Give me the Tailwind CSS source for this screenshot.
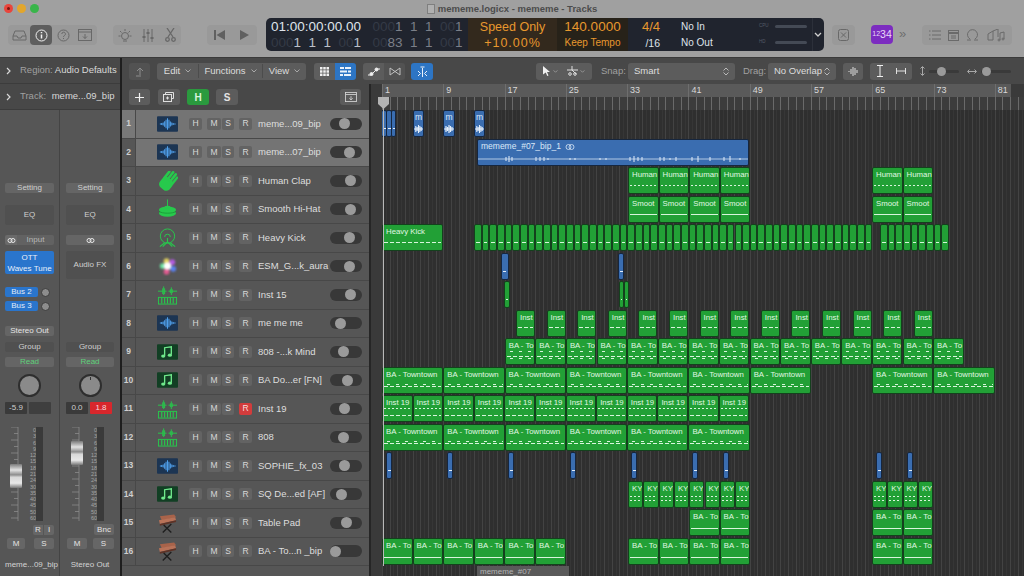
<!DOCTYPE html>
<html lang="en">
<head>
    <meta charset="UTF-8">
    <title>mememe.logicx - mememe - Tracks</title>
    <script src="https://cdn.jsdelivr.net/npm/@tailwindcss/browser@4"></script>
</head>
<body class="w-[1024px] h-[576px] overflow-hidden bg-[#4a4a4a] font-['Liberation_Sans',sans-serif] text-[9.5px] text-[#d8d8d8] flex flex-col">

    <!-- icon symbols -->
    <svg class="hidden">
        <symbol id="i-wave" viewBox="0 0 22 16">
            <rect width="22" height="16" rx="1" fill="#1c3553"/>
            <path d="M3 8h1.500M5 7v2M6.500 6.500v3M8 5v6M9.500 3.500v9M11 2v12M12.500 3.500v9M14 5.500v5M15.500 6.500v3M17 7v2M18 8h1.500" stroke="#4f9fea" stroke-width="1.100" fill="none"/>
        </symbol>
        <symbol id="i-hand" viewBox="0 0 22 20">
            <g transform="rotate(38 11 11)" fill="#27c94c">
                <rect x="4.500" y="7" width="13" height="13" rx="4.500"/>
                <rect x="4.500" y="0" width="2.800" height="11" rx="1.400"/>
                <rect x="8" y="-2" width="2.800" height="12" rx="1.400"/>
                <rect x="11.500" y="-2" width="2.800" height="12" rx="1.400"/>
                <rect x="14.800" y="0" width="2.600" height="11" rx="1.300"/>
            </g>
        </symbol>
        <symbol id="i-hat" viewBox="0 0 22 20">
            <path d="M11 0v7" stroke="#27c94c" stroke-width="1"/>
            <ellipse cx="11" cy="11" rx="9" ry="3.500" fill="#27c94c"/>
            <ellipse cx="11" cy="14.500" rx="9" ry="3.500" fill="#27c94c"/>
            <path d="M2 12.500c3 2.500 15 2.500 18 0" stroke="#178a32" stroke-width=".7" fill="none"/>
            <ellipse cx="11" cy="8" rx="3" ry="1.500" fill="#27c94c"/>
        </symbol>
        <symbol id="i-kick" viewBox="0 0 22 20">
            <circle cx="11" cy="8" r="7.500" fill="none" stroke="#27c94c" stroke-width="1"/>
            <path d="M8 9a3 3 0 0 1 6 0" fill="none" stroke="#27c94c" stroke-width="1"/>
            <path d="M11 10v5M11 14l-5 5M11 14l5 5M3 19l5-4M19 19l-5-4" stroke="#27c94c" stroke-width="1.200" fill="none"/>
        </symbol>
        <symbol id="i-aura" viewBox="0 0 22 20">
            <defs><filter id="soft"><feGaussianBlur stdDeviation="1.200"/></filter></defs>
            <g filter="url(#soft)">
                <circle cx="6" cy="10" r="3" fill="#6de0a0"/>
                <circle cx="10" cy="5" r="3" fill="#e0d060"/>
                <circle cx="16" cy="6" r="3" fill="#b05ae0"/>
                <circle cx="17" cy="13" r="3" fill="#5a80f0"/>
                <circle cx="10" cy="16" r="3" fill="#e05a90"/>
                <circle cx="11" cy="10" r="4" fill="#ffffff"/>
            </g>
        </symbol>
        <symbol id="i-inst" viewBox="0 0 22 20">
            <path d="M1 6h5M8 6h2M12 6h2M16 6h5" stroke="#27c94c" stroke-width="1"/>
            <path d="M7 1v9M6 3v6M8 3v6M15 2v8M14 4v4M16 4v4" stroke="#27c94c" stroke-width="1"/>
            <rect x="1.500" y="12.500" width="19" height="7" fill="none" stroke="#27c94c" stroke-width="1"/>
            <path d="M5 13v6M8 13v6M11 13v6M14 13v6M17 13v6" stroke="#27c94c" stroke-width="1.200"/>
        </symbol>
        <symbol id="i-note" viewBox="0 0 22 16">
            <rect width="22" height="16" rx="1" fill="#123f24"/>
            <path d="M8 12V3.500l7-1V11" stroke="#6fe98b" stroke-width="1.400" fill="none"/>
            <ellipse cx="6.500" cy="12.300" rx="2.200" ry="1.700" fill="#6fe98b"/>
            <ellipse cx="13.500" cy="11.300" rx="2.200" ry="1.700" fill="#6fe98b"/>
        </symbol>
        <symbol id="i-keys" viewBox="0 0 22 20">
            <path d="M3 3l15-2l2 3l-15 3z" fill="#a8634a"/>
            <path d="M2 7l17-3l1 3l-17 4z" fill="#b87258"/>
            <path d="M3 11l17-4v2l-17 4z" fill="#5e3226"/>
            <path d="M7 12l8 8M15 11l-9 9" stroke="#1e1e1e" stroke-width="1.400"/>
        </symbol>
    </svg>

    <!-- title bar + main toolbar -->
    <header class="h-[58px] shrink-0 bg-[#a0a0a0] border-b border-[#3a3a3a] relative">
        <div class="absolute left-[4px] top-[4px] flex gap-[4px]">
            <span class="w-[9px] h-[9px] rounded-full bg-[#e8453c] flex items-center justify-center"><span class="w-[3px] h-[3px] rounded-full bg-[#7a1510]"></span></span>
            <span class="w-[9px] h-[9px] rounded-full bg-[#e2a62c]"></span>
            <span class="w-[9px] h-[9px] rounded-full bg-[#39b54a]"></span>
        </div>
        <div class="h-[18px] flex items-center justify-center gap-[3px] font-bold text-[9.5px] text-[#4c4c4c]">
            <svg class="w-[8px] h-[10px]" viewBox="0 0 8 10"><rect x="0.500" y="0.500" width="7" height="9" fill="#b0b0b0" stroke="#7f7f7f"/></svg>
            <span>mememe.logicx - mememe - Tracks</span>
        </div>
        <div class="h-[39px] flex items-start pl-[8px]">
            <div class="mt-[7px] h-[20px] w-[89px] rounded-[4px] bg-[#999999] flex items-center text-[#686868]">
                <span class="w-[22px] flex justify-center"><svg class="w-[15px] h-[12px]" viewBox="0 0 15 12" fill="none" stroke="currentColor"><path d="M1 7l2-5h9l2 5v4H1zM1 7h4l1 2h3l1-2h4"/></svg></span>
                <span class="w-[22px] h-[20px] bg-[#5e5e5e] rounded-[4px] flex items-center justify-center"><svg class="w-[13px] h-[13px]" viewBox="0 0 13 13" fill="none" stroke="#f2f2f2"><circle cx="6.500" cy="6.500" r="5.500"/><path d="M6.500 5.500v4M6.500 3v1.200" stroke-width="1.500"/></svg></span>
                <span class="w-[22px] flex justify-center"><svg class="w-[13px] h-[13px]" viewBox="0 0 13 13" fill="none" stroke="currentColor"><circle cx="6.500" cy="6.500" r="5.500"/><path d="M4.800 5a1.800 1.800 0 1 1 2.600 1.600c-.6.300-.9.700-.9 1.400M6.500 9v1"/></svg></span>
                <span class="w-[22px] flex justify-center"><svg class="w-[14px] h-[12px]" viewBox="0 0 14 12" fill="none" stroke="currentColor"><rect x="0.500" y="0.500" width="13" height="11"/><path d="M0.500 3h13M7 5v4.500M5 7.500l2 2l2-2"/></svg></span>
            </div>
            <div class="ml-[16px] mt-[7px] h-[20px] w-[68px] rounded-[4px] bg-[#999999] flex items-center text-[#686868]">
                <span class="w-[24px] flex justify-center"><svg class="w-[14px] h-[14px]" viewBox="0 0 14 14" fill="none" stroke="currentColor"><circle cx="7" cy="8" r="3.500"/><path d="M7 1v2M2 3l1.500 1.500M12 3l-1.500 1.500M0.500 8h2M11.500 8h2M5 13h4"/></svg></span>
                <span class="w-[22px] flex justify-center"><svg class="w-[12px] h-[13px]" viewBox="0 0 12 13" fill="none" stroke="currentColor"><path d="M2 0v13M6 0v13M10 0v13"/><path d="M0.500 8h3M4.500 4h3M8.500 9h3" stroke-width="2"/></svg></span>
                <span class="w-[22px] flex justify-center"><svg class="w-[11px] h-[14px]" viewBox="0 0 11 14" fill="none" stroke="currentColor" stroke-width="1.300"><path d="M2 0l6 9M9 0l-6 9"/><circle cx="2.500" cy="11.500" r="1.800"/><circle cx="8.500" cy="11.500" r="1.800"/></svg></span>
            </div>
            <div class="ml-[26px] mt-[7px] h-[20px] w-[50px] rounded-[4px] bg-[#999999] flex items-center text-[#606060]">
                <span class="w-[24px] flex justify-center"><svg class="w-[11px] h-[10px]" viewBox="0 0 11 10" fill="currentColor"><rect width="2" height="10"/><path d="M11 0v10L2.500 5z"/></svg></span>
                <span class="w-[26px] flex justify-center"><svg class="w-[9px] h-[10px]" viewBox="0 0 9 10" fill="currentColor"><path d="M0 0v10l9-5z"/></svg></span>
            </div>

            <!-- LCD -->
            <div class="ml-[9px] h-[33px] w-[558px] rounded-[5px] bg-[#20242e] flex overflow-hidden">
                <div class="w-[202px] pl-[5px] pt-[1px] text-[#7b7f88] leading-[16px] text-[13.5px]">
                    <div class="flex"><span class="text-[#dfe3ea] w-[98px]">01:00:00:00.00</span><span class="ml-[4px] w-[96px] whitespace-pre"><span class="text-[#343a46]">000</span>1  1  1  <span class="text-[#343a46]">00</span>1</span></div>
                    <div class="flex"><span class="w-[98px] whitespace-pre"><span class="text-[#343a46]">000</span><span class="text-[#bcc0c8]">1  1  1  </span><span class="text-[#343a46]">00</span><span class="text-[#bcc0c8]">1</span></span><span class="ml-[4px] w-[96px] whitespace-pre"><span class="text-[#343a46]">00</span>83  1  1  <span class="text-[#343a46]">00</span>1</span></div>
                </div>
                <div class="w-[89px] bg-[#33291d] text-[#e8982e] text-[12.5px] leading-[16px] text-center pt-[1px]">
                    <div>Speed Only</div>
                    <div class="tracking-[1px]">+10.00%</div>
                </div>
                <div class="w-[71px] bg-[#272219] text-[#e8982e] text-center pt-[1px]">
                    <div class="text-[13.5px] leading-[16px]">140.0000</div>
                    <div class="text-[10px] leading-[16px]">Keep Tempo</div>
                </div>
                <div class="w-[47px] text-right pr-[15px] pt-[1px] leading-[16px]">
                    <div class="text-[13px] text-[#e8982e]">4/4</div>
                    <div class="text-[10.5px] text-[#dfe3ea]">/16</div>
                </div>
                <div class="w-[80px] pl-[6px] pt-[1px] leading-[16px] text-[#dfe3ea] text-[10px]">
                    <div>No In</div>
                    <div>No Out</div>
                </div>
                <div class="w-[57px] pl-[4px] pt-[5px] text-[4.5px] text-[#555b66] flex flex-col gap-[10px] leading-[6px]">
                    <div class="flex items-center gap-[3px]"><span class="w-[13px]">CPU</span><span class="w-[32px] h-[3px] bg-[#444a55] rounded-full"></span></div>
                    <div class="flex items-center gap-[3px]"><span class="w-[13px]">HD</span><span class="w-[32px] h-[3px] bg-[#444a55] rounded-full"></span></div>
                </div>
                <div class="flex-1 flex items-center justify-end pr-[2px] border-l border-[#2c303a]">
                    <svg class="w-[8px] h-[5px]" viewBox="0 0 8 5" fill="none" stroke="#d0d0d0" stroke-width="1.300"><path d="M1 1l3 3l3-3"/></svg>
                </div>
            </div>

            <div class="ml-[8px] mt-[7px] w-[23px] h-[20px] rounded-[4px] bg-[#999999] flex items-center justify-center text-[#686868]">
                <svg class="w-[11px] h-[12px]" viewBox="0 0 11 12" fill="none" stroke="currentColor"><rect x="0.500" y="0.500" width="10" height="11" rx="2"/><path d="M3 3.500l5 5M8 3.500l-5 5"/></svg>
            </div>
            <div class="ml-[16px] mt-[7px] w-[22px] h-[19px] rounded-[4px] bg-[#7c2cc0] text-[#e8d8f8] text-[10.5px] flex items-center justify-center"><span class="text-[7px]">12</span>34</div>
            <span class="ml-[6px] mt-[9px] text-[#6e6e6e] text-[13px] leading-[14px]">»</span>
            <div class="ml-[16px] mt-[7px] w-[90px] h-[20px] rounded-[4px] bg-[#999999] flex items-center justify-around px-[3px] text-[#6a6a6a]">
                <svg class="w-[12px] h-[10px]" viewBox="0 0 12 10" fill="none" stroke="currentColor"><path d="M0 1h1.500M3 1h9M0 5h1.500M3 5h9M0 9h1.500M3 9h9"/></svg>
                <svg class="w-[11px] h-[11px]" viewBox="0 0 11 11" fill="none" stroke="currentColor"><rect x="0.500" y="0.500" width="10" height="10"/><path d="M0.500 3h10" stroke-width="2"/><path d="M3 6h5M3 8h5"/></svg>
                <svg class="w-[13px] h-[12px]" viewBox="0 0 13 12" fill="none" stroke="currentColor"><path d="M4 10a5 5 0 1 1 5 0M1 11h4M8 11h4"/></svg>
                <svg class="w-[19px] h-[13px]" viewBox="0 0 19 13" fill="none" stroke="currentColor"><path d="M1 5l5-3v9H1zM6 2l5-2v8M13 4v7M17 3v7M13 4l4-1"/><circle cx="12" cy="11" r="1"/><circle cx="16" cy="10" r="1"/></svg>
            </div>
        </div>
    </header>

    <main class="flex-1 flex min-h-0">
        <!-- inspector -->
        <aside class="w-[120px] shrink-0 flex flex-col bg-[#565656]">
            <div class="h-[26px] bg-[#484848] border-b border-[#3c3c3c] flex items-center pl-[6px] gap-[9px] whitespace-nowrap">
                <svg class="w-[5px] h-[8px]" viewBox="0 0 5 8" fill="none" stroke="#d8d8d8" stroke-width="1.200"><path d="M1 1l3 3l-3 3"/></svg>
                <span><span class="text-[#a0a0a0]">Region:</span> Audio Defaults</span>
            </div>
            <div class="h-[26px] bg-[#484848] border-b border-[#3c3c3c] flex items-center pl-[6px] gap-[9px] whitespace-nowrap">
                <svg class="w-[5px] h-[8px]" viewBox="0 0 5 8" fill="none" stroke="#d8d8d8" stroke-width="1.200"><path d="M1 1l3 3l-3 3"/></svg>
                <span><span class="text-[#a0a0a0]">Track:</span> <span class="ml-[3px]">meme...09_bip</span></span>
            </div>
            <div class="flex flex-1 text-[8px] text-[#cfcfcf]">
                <!-- strip 1 -->
                <div class="w-[60px] border-r border-[#444] px-[5px] flex flex-col">
                    <div class="mt-[73px] h-[10px] rounded-[2px] bg-[#656565] flex items-center justify-center leading-none">Setting</div>
                    <div class="mt-[12px] h-[20px] rounded-[2px] bg-[#505050] flex items-center justify-center">EQ</div>
                    <div class="mt-[10px] h-[10px] flex">
                        <span class="w-[12px] rounded-l-[2px] bg-[#6a6a6a] flex items-center justify-center"><svg class="w-[9px] h-[5px]" viewBox="0 0 9 5" fill="none" stroke="#e8e8e8"><circle cx="3" cy="2.500" r="2"/><circle cx="6" cy="2.500" r="2"/></svg></span>
                        <span class="flex-1 rounded-r-[2px] bg-[#626262] flex items-center justify-center text-[#b8b8b8]">Input</span>
                    </div>
                    <div class="mt-[6px] h-[23px] rounded-[2px] bg-[#2a75cc] text-[#e8f0fa] flex flex-col items-center justify-center whitespace-nowrap leading-[11px]"><span>OTT</span><span>Waves Tune</span></div>
                    <div class="mt-[13px] h-[10px] flex items-center gap-[3px]"><span class="w-[33px] h-full rounded-[2px] bg-[#2a75cc] text-[#e0ebf8] flex items-center justify-center">Bus 2</span><span class="w-[9px] h-[9px] rounded-full bg-[#8d8d8d] border border-[#3c3c3c]"></span></div>
                    <div class="mt-[4px] h-[10px] flex items-center gap-[3px]"><span class="w-[33px] h-full rounded-[2px] bg-[#2a75cc] text-[#e0ebf8] flex items-center justify-center">Bus 3</span><span class="w-[9px] h-[9px] rounded-full bg-[#8d8d8d] border border-[#3c3c3c]"></span></div>
                    <div class="mt-[15px] h-[10px] rounded-[2px] bg-[#656565] flex items-center justify-center text-[#e4e4e4]">Stereo Out</div>
                    <div class="mt-[6px] h-[10px] rounded-[2px] bg-[#505050] flex items-center justify-center">Group</div>
                    <div class="mt-[5px] h-[10px] rounded-[2px] bg-[#656565] flex items-center justify-center text-[#5fd07a]">Read</div>
                    <div class="mt-[7px] w-[23px] h-[23px] mx-auto rounded-full bg-[#8a8a8a] border-[2px] border-[#2e2e2e]"></div>
                    <div class="mt-[5px] h-[12px] flex gap-[2px]"><span class="w-[22px] rounded-[1px] bg-[#3a3a3a] flex items-center justify-center">-5.9</span><span class="w-[22px] rounded-[1px] bg-[#3f3f3f]"></span></div>
                    <div id="fader1" class="mt-[13px] h-[94px] relative"></div>
                    <div class="mt-[4px] h-[10px] flex justify-end"><span class="w-[10px] bg-[#666] rounded-l-[2px] flex items-center justify-center text-[#e4e4e4]">R</span><span class="w-[10px] ml-px bg-[#666] rounded-r-[2px] flex items-center justify-center text-[#e4e4e4]">I</span></div>
                    <div class="mt-[3px] h-[11px] flex justify-between"><span class="ml-[2px] w-[18px] rounded-[2px] bg-[#666] flex items-center justify-center text-[#e4e4e4]">M</span><span class="w-[20px] rounded-[2px] bg-[#666] flex items-center justify-center text-[#e4e4e4]">S</span></div>
                    <div class="mt-[10px] text-center whitespace-nowrap text-[#d4d4d4]">meme...09_bip</div>
                </div>
                <!-- strip 2 -->
                <div class="w-[60px] px-[6px] flex flex-col">
                    <div class="mt-[73px] h-[10px] rounded-[2px] bg-[#656565] flex items-center justify-center leading-none">Setting</div>
                    <div class="mt-[12px] h-[20px] rounded-[2px] bg-[#505050] flex items-center justify-center">EQ</div>
                    <div class="mt-[10px] h-[10px] rounded-[2px] bg-[#656565] flex items-center justify-center"><svg class="w-[9px] h-[5px]" viewBox="0 0 9 5" fill="none" stroke="#e8e8e8"><circle cx="3" cy="2.500" r="2"/><circle cx="6" cy="2.500" r="2"/></svg></div>
                    <div class="mt-[6px] h-[28px] rounded-[2px] bg-[#505050] flex items-center justify-center">Audio FX</div>
                    <div class="mt-[63px] h-[10px] rounded-[2px] bg-[#505050] flex items-center justify-center">Group</div>
                    <div class="mt-[5px] h-[10px] rounded-[2px] bg-[#656565] flex items-center justify-center text-[#5fd07a]">Read</div>
                    <div class="mt-[7px] w-[23px] h-[23px] mx-auto rounded-full bg-[#8a8a8a] border-[2px] border-[#2e2e2e] flex justify-center"><span class="w-px h-[3px] bg-[#333] mt-[1px]"></span></div>
                    <div class="mt-[5px] h-[12px] flex gap-[2px]"><span class="w-[22px] rounded-[1px] bg-[#3a3a3a] flex items-center justify-center">0.0</span><span class="w-[22px] rounded-[1px] bg-[#d8272c] flex items-center justify-center text-[#f4dcdc]">1.8</span></div>
                    <div id="fader2" class="mt-[13px] h-[94px] relative"></div>
                    <div class="mt-[3px] h-[11px] flex justify-end"><span class="w-[20px] bg-[#666] rounded-[2px] flex items-center justify-center text-[#e4e4e4]">Bnc</span></div>
                    <div class="mt-[3px] h-[11px] flex justify-between"><span class="ml-[1px] w-[20px] rounded-[2px] bg-[#666] flex items-center justify-center text-[#e4e4e4]">M</span><span class="w-[21px] rounded-[2px] bg-[#666] flex items-center justify-center text-[#e4e4e4]">S</span></div>
                    <div class="mt-[10px] text-center whitespace-nowrap text-[#d4d4d4]">Stereo Out</div>
                </div>
            </div>
        </aside>
        <div class="w-[2px] shrink-0 bg-[#1e1e1e]"></div>

        <!-- tracks area -->
        <section class="flex-1 flex flex-col min-w-0">
            <!-- tools row -->
            <div class="h-[26px] shrink-0 bg-[#484848] flex items-center pl-[7px] text-[9.5px]">
                <span class="w-[21px] h-[17px] rounded-[3px] bg-[#525252] flex items-center justify-center"><svg class="w-[10px] h-[11px]" viewBox="0 0 10 11" fill="none" stroke="#8c8c8c"><path d="M5 11V2M2 5l3-3l3 3M1 10h3"/></svg></span>
                <div class="ml-[7px] w-[149px] h-[17px] rounded-[3px] bg-[#5c5c5c] flex items-center text-[#dcdcdc]">
                    <span class="w-[41px] flex items-center justify-center gap-[5px]">Edit<svg class="w-[6px] h-[4px]" viewBox="0 0 6 4" fill="none" stroke="#a8a8a8"><path d="M.5.500L3 3L5.500.500"/></svg></span>
                    <span class="w-[65px] flex items-center justify-center gap-[5px] border-x border-[#4c4c4c]">Functions<svg class="w-[6px] h-[4px]" viewBox="0 0 6 4" fill="none" stroke="#a8a8a8"><path d="M.5.500L3 3L5.500.500"/></svg></span>
                    <span class="w-[43px] flex items-center justify-center gap-[5px]">View<svg class="w-[6px] h-[4px]" viewBox="0 0 6 4" fill="none" stroke="#a8a8a8"><path d="M.5.500L3 3L5.500.500"/></svg></span>
                </div>
                <div class="ml-[8px] flex h-[17px]">
                    <span class="w-[21px] rounded-l-[3px] bg-[#5e5e5e] flex items-center justify-center"><svg class="w-[9px] h-[9px]" viewBox="0 0 9 9" fill="#f0f0f0"><path d="M0 0h2.500v2.500H0zM3.250 0h2.500v2.500h-2.500zM6.500 0H9v2.500H6.500zM0 3.250h2.500v2.500H0zM3.250 3.250h2.500v2.500h-2.500zM6.500 3.250H9v2.500H6.500zM0 6.500h2.500V9H0zM3.250 6.500h2.500V9h-2.500zM6.500 6.500H9V9H6.500z"/></svg></span>
                    <span class="w-[21px] rounded-r-[3px] bg-[#2d75c4] flex items-center justify-center"><svg class="w-[11px] h-[9px]" viewBox="0 0 11 9" fill="#eaf2fb"><path d="M0 0h4v2H0zM5 0h6v2H5zM0 3.500h7v2H0zM8 3.500h3v2H8zM0 7h3v2H0zM4 7h7v2H4z"/></svg></span>
                </div>
                <div class="ml-[7px] flex h-[17px]">
                    <span class="w-[21px] rounded-l-[3px] bg-[#5c5c5c] flex items-center justify-center"><svg class="w-[12px] h-[9px]" viewBox="0 0 12 9" fill="none" stroke="#f0f0f0"><path d="M0 8h3l6-6h3"/><circle cx="3.500" cy="7" r="1.500" fill="#f0f0f0"/><circle cx="8.500" cy="2.500" r="1.500" fill="#f0f0f0"/></svg></span>
                    <span class="w-[21px] rounded-r-[3px] bg-[#525252] flex items-center justify-center"><svg class="w-[12px] h-[9px]" viewBox="0 0 12 9" fill="none" stroke="#c0c0c0"><path d="M1 1l10 7V1L1 8z"/></svg></span>
                </div>
                <span class="ml-[6px] w-[22px] h-[17px] rounded-[3px] bg-[#2d75c4] flex items-center justify-center"><svg class="w-[11px] h-[11px]" viewBox="0 0 11 11" fill="none" stroke="#eaf2fb"><path d="M5.500 2v9M1 5l2.500 2.500L1 10M10 5L7.500 7.500L10 10M3.500 1h4"/></svg></span>

                <div class="ml-[103px] w-[56px] h-[17px] rounded-[3px] bg-[#5c5c5c] flex items-center justify-around px-[2px]">
                    <span class="flex items-center gap-[3px]"><svg class="w-[7px] h-[10px]" viewBox="0 0 7 10" fill="#f0f0f0"><path d="M0 0l7 6H4l1.500 3.500l-1.300.5L2.800 6.500L0 8.500z"/></svg><svg class="w-[5px] h-[3px]" viewBox="0 0 6 4" fill="none" stroke="#a8a8a8"><path d="M.5.500L3 3L5.500.500"/></svg></span>
                    <span class="flex items-center gap-[2px]"><svg class="w-[11px] h-[10px]" viewBox="0 0 11 10" fill="none" stroke="#e0e0e0"><path d="M0 4h11M5 0v4l4 4"/><circle cx="3" cy="8" r="1.300"/><circle cx="8" cy="8" r="1.300"/></svg><svg class="w-[5px] h-[3px]" viewBox="0 0 6 4" fill="none" stroke="#a8a8a8"><path d="M.5.500L3 3L5.500.500"/></svg></span>
                </div>
                <span class="ml-[9px] w-[27px] text-[#a0a0a0]">Snap:</span>
                <div class="w-[107px] h-[17px] rounded-[3px] bg-[#5c5c5c] flex items-center justify-between px-[6px] text-[#dcdcdc]">Smart<svg class="w-[6px] h-[9px]" viewBox="0 0 6 9" fill="none" stroke="#b8b8b8"><path d="M.5 3.500L3 1l2.500 2.500M.5 5.500L3 8l2.500-2.500"/></svg></div>
                <span class="ml-[8px] w-[25px] text-[#a0a0a0]">Drag:</span>
                <div class="w-[68px] h-[17px] rounded-[3px] bg-[#5c5c5c] flex items-center justify-between px-[6px] text-[#dcdcdc] whitespace-nowrap">No Overlap<svg class="w-[6px] h-[9px]" viewBox="0 0 6 9" fill="none" stroke="#b8b8b8"><path d="M.5 3.500L3 1l2.500 2.500M.5 5.500L3 8l2.500-2.500"/></svg></div>
                <span class="ml-[7px] w-[20px] h-[17px] rounded-[3px] bg-[#5c5c5c] flex items-center justify-center"><svg class="w-[11px] h-[11px]" viewBox="0 0 11 11" fill="none" stroke="#e0e0e0"><path d="M1 5v1M3 3v5M5 1v9M7 2v7M9 4v3"/></svg></span>
                <div class="ml-[7px] w-[42px] h-[17px] rounded-[3px] bg-[#5c5c5c] flex items-center justify-around">
                    <svg class="w-[8px] h-[12px]" viewBox="0 0 8 12" fill="none" stroke="#f0f0f0"><path d="M1 .5h6M1 11.500h6M4 1v10"/></svg>
                    <svg class="w-[10px] h-[6px]" viewBox="0 0 10 6" fill="none" stroke="#e0e0e0"><path d="M.5 0v6M9.500 0v6M1 3h8"/></svg>
                </div>
                <div class="ml-[8px] flex items-center gap-[4px]">
                    <svg class="w-[5px] h-[10px]" viewBox="0 0 5 10" fill="none" stroke="#a8a8a8"><path d="M.5 2.500L2.500.5l2 2M.5 7.500l2 2l2-2M2.500 1v8"/></svg>
                    <span class="w-[30px] h-[3px] rounded-full bg-[#3a3a3a] relative"><span class="absolute left-[8px] -top-[3px] w-[9px] h-[9px] rounded-full bg-[#9a9a9a]"></span></span>
                    <svg class="ml-[4px] w-[10px] h-[5px]" viewBox="0 0 10 5" fill="none" stroke="#a8a8a8"><path d="M2.500.5l-2 2l2 2M7.500.5l2 2l-2 2M1 2.500h8"/></svg>
                    <span class="w-[30px] h-[3px] rounded-full bg-[#3a3a3a] relative"><span class="absolute left-[1px] -top-[3px] w-[9px] h-[9px] rounded-full bg-[#9a9a9a]"></span></span>
                </div>
            </div>

            <div class="flex-1 flex min-h-0">
                <!-- track list -->
                <div class="w-[247px] shrink-0 flex flex-col">
                    <div class="h-[26px] shrink-0 bg-[#484848] flex items-center pl-[7px] text-[#e0e0e0]">
                        <span class="w-[21px] h-[16px] rounded-[3px] bg-[#5c5c5c] flex items-center justify-center"><svg class="w-[9px] h-[9px]" viewBox="0 0 9 9" stroke="#f0f0f0" stroke-width="1.200"><path d="M4.500 0v9M0 4.500h9"/></svg></span>
                        <span class="ml-[8px] w-[22px] h-[16px] rounded-[3px] bg-[#5c5c5c] flex items-center justify-center"><svg class="w-[12px] h-[10px]" viewBox="0 0 12 10" fill="none" stroke="#e0e0e0"><path d="M2.500 2.500V.5h8v6h-2"/><rect x="0.500" y="2.500" width="8" height="7"/><path d="M4.500 4.500v3M3 6h3"/></svg></span>
                        <span class="ml-[7px] w-[22px] h-[16px] rounded-[3px] bg-[#2a9a3e] flex items-center justify-center font-bold text-[10px] text-[#d8f5dc]">H</span>
                        <span class="ml-[7px] w-[22px] h-[16px] rounded-[3px] bg-[#5c5c5c] flex items-center justify-center font-bold text-[10px] text-[#e4e4e4]">S</span>
                        <span class="ml-[102px] w-[21px] h-[16px] rounded-[3px] bg-[#5c5c5c] flex items-center justify-center"><svg class="w-[12px] h-[10px]" viewBox="0 0 14 12" fill="none" stroke="#d8d8d8"><rect x="0.500" y="0.500" width="13" height="11"/><path d="M0.500 3h13M7 5v4.500M5 7.500l2 2l2-2"/></svg></span>
                    </div>
                    <div id="tracks" class="flex-1 bg-[#565656] flex flex-col"></div>
                </div>
                <!-- arrange area -->
                <div class="flex-1 flex flex-col min-w-0 border-l-[2px] border-[#262626] bg-[#3a3a3a]">
                    <div id="ruler" class="h-[13px] shrink-0 ml-[11px] mr-[13px] bg-[#5a5a5a] relative text-[9px] text-[#d8d8d8] leading-[13px] bg-[repeating-linear-gradient(90deg,#6e6e6e_0_1px,transparent_1px_61.28px)]"></div>
                    <div class="h-[13px] shrink-0 ml-[11px] bg-[#3c3c3c] bg-[repeating-linear-gradient(90deg,#6a6a6a_0_1px,transparent_1px_7.66px)]"></div>
                    <div id="canvas" class="flex-1 ml-[11px] relative overflow-hidden bg-[#2f2f2f] bg-[repeating-linear-gradient(90deg,#434343_0_1px,#2f2f2f_1px_3.83px,#363636_3.83px_4.83px,#2f2f2f_4.83px_7.66px)]"></div>
                </div>
            </div>
        </section>
    </main>

    <!-- playhead -->
    <div class="absolute left-[383px] top-[97px] w-px h-[469px] bg-[#b8b8b8]"></div>
    <svg class="absolute left-[378px] top-[97px] w-[11px] h-[12px]" viewBox="0 0 11 12"><path d="M0 0h11v7l-5.500 5L0 7z" fill="#b4b4b4"/></svg>

    <script>
        // track list
        const tracks = [
            ["1", "i-wave", "meme...09_bip", 345], ["2", "i-wave", "meme...07_bip", 350],
            ["3", "i-hand", "Human Clap", 351], ["4", "i-hat", "Smooth Hi-Hat", 351],
            ["5", "i-kick", "Heavy Kick", 350], ["6", "i-aura", "ESM_G...k_aura", 350],
            ["7", "i-inst", "Inst 15", 351], ["8", "i-wave", "me me me", 341],
            ["9", "i-note", "808 -...k Mind", 344], ["10", "i-note", "BA Do...er [FN]", 348],
            ["11", "i-inst", "Inst 19", 345], ["12", "i-inst", "808", 344],
            ["13", "i-wave", "SOPHIE_fx_03", 345], ["14", "i-note", "SQ De...ed [AF]", 342],
            ["15", "i-keys", "Table Pad", 347], ["16", "i-keys", "BA - To...n _bip", 336],
        ];
        const btn = "h-[12px] rounded-[2px] bg-[#636363] flex items-center justify-center text-[8.5px] text-[#d8d8d8]";
        const btnRed = "h-[12px] rounded-[2px] bg-[#d33c3c] flex items-center justify-center text-[8.5px] text-[#f6dede]";
        document.getElementById("tracks").innerHTML = tracks.map((t, i) => {
            const sel = i < 2;
            const numCls = i === 0 ? "bg-[#787878]" : "bg-[#565656]";
            const rowCls = sel ? "bg-[#747474]" : "bg-[#565656]";
            const tall = t[1] === "i-wave" || t[1] === "i-note";
            const ic = tall ? "w-[21px] h-[16px]" : "w-[21px] h-[20px]";
            return `<div class="h-[28.5px] flex items-center border-b border-[#484848]">
                <span class="w-[14px] h-full ${numCls} border-r border-[#484848] flex items-center justify-center text-[8.5px] font-bold text-[#cfcfcf]">${t[0]}</span>
                <span class="flex-1 h-full ${rowCls} flex items-center">
                    <svg class="ml-[21px] ${ic}"><use href="#${t[1]}"/></svg>
                    <span class="ml-[11px] flex">
                        <span class="w-[13px] ${btn}">H</span><span class="ml-[5px] w-[14px] ${btn}">M</span><span class="ml-px w-[12px] ${btn}">S</span><span class="ml-[5px] w-[13px] ${t[0] === "11" ? btnRed : btn}">R</span>
                    </span>
                    <span class="ml-[6px] w-[72px] whitespace-nowrap text-[9.5px] text-[#dedede]">${t[2]}</span>
                    <span class="w-[32px] h-[12px] rounded-full bg-[#383838] relative shrink-0"><span class="absolute top-[0.5px] w-[11px] h-[11px] rounded-full bg-[#9a9a9a]" style="left:${t[3] - 336}px"></span></span>
                </span>
            </div>`;
        }).join("");

        // ruler: 8 bars = 61.28px, bar 1 at x=383
        let rulerHtml = "";
        for (let bar = 1; bar <= 81; bar += 8) {
            rulerHtml += `<span class="absolute" style="left:${(bar - 1) * 7.66 + 3}px">${bar}</span>`;
        }
        document.getElementById("ruler").innerHTML = rulerHtml;

        // arrange regions, x in page pixels
        const X0 = 383;
        const rowTop = r => Math.round(28.5 * r);
        const dot = "bg-[repeating-linear-gradient(90deg,#d8f5dc_0_2px,transparent_2px_4px)]";
        const dash = "bg-[repeating-linear-gradient(90deg,#d8f5dc_0_4px,transparent_4px_6px)]";
        const dashB = "bg-[repeating-linear-gradient(90deg,transparent_0_3px,#d8f5dc_3px_6px,transparent_6px_9px)]";
        const solid = "bg-[#d8f5dc]";
        const patterns = {
            human: [[17, dot]], smooth: [[17, solid]], kick: [[17, dash]], tiny: [[17, dash]],
            inst: [[16, dash]], town: [[16, dashB], [18, dash]], to: [[12, dashB], [17, dash], [19, dashB]],
            i19: [[12, dot], [19, dash]], ky: [[14, dot], [18, dot]], line: [[18, solid]],
        };
        let html = "";
        function green(r, x, w, label, p) {
            const lines = patterns[p].map(l => `<span class="absolute left-[1px] right-[1px] h-px ${l[1]}" style="top:${l[0]}px"></span>`).join("");
            html += `<div class="absolute h-[27px] rounded-[2px] bg-[#22a036] border border-[#14401d] overflow-hidden text-[7.8px] text-[#e0f7e3] whitespace-nowrap leading-[13px] pl-[3px]" style="left:${x - X0}px;top:${rowTop(r)}px;width:${w}px">${label}${lines}</div>`;
        }
        function blue(r, x, w, label) {
            const wave = label
                ? `<svg class="absolute left-0 top-[13px] w-full h-[10px]" viewBox="0 0 10 10" preserveAspectRatio="none"><path d="M0 5h10M2 2v6M3.500 3v4M5 1v8M6.500 2v6M8 3v4" stroke="#e4eefa" stroke-width="1.200" fill="none"/></svg>`
                : `<span class="absolute left-[1px] top-[17px] w-[3px] h-px bg-[#e4eefa]"></span>`;
            html += `<div class="absolute h-[27px] rounded-[2px] bg-[#3a6db0] border border-[#16263e] overflow-hidden text-[8.5px] text-[#dbe8f8] text-center leading-[13px]" style="left:${x - X0}px;top:${rowTop(r)}px;width:${w}px">${label}${wave}</div>`;
        }
        function series(r, x, step, n, label, p) {
            for (let i = 0; i < n; i++) green(r, x + i * step, step, label, p);
        }

        // track 1
        blue(0, 382, 6, ""); blue(0, 387, 6, ""); blue(0, 392, 5, "");
        blue(0, 414, 11, "m"); blue(0, 444, 12, "m"); blue(0, 475, 11, "m");
        // track 2
        html += `<div class="absolute h-[27px] rounded-[2px] bg-[#3a6db0] border border-[#16263e] overflow-hidden text-[8.5px] text-[#dbe8f8] leading-[13px] pl-[3px] whitespace-nowrap flex items-start gap-[4px]" style="left:${478 - X0}px;top:${rowTop(1)}px;width:272px">
            <span>mememe_#07_bip_1</span>
            <svg class="w-[10px] h-[6px] mt-[4px]" viewBox="0 0 10 6" fill="none" stroke="#dbe8f8" stroke-width=".8"><circle cx="3.500" cy="3" r="2.500"/><circle cx="6.500" cy="3" r="2.500"/></svg>
            <svg class="absolute left-0 top-[14px] w-[272px] h-[10px]" viewBox="0 0 272 10" fill="none" stroke="#e4eefa"><path d="M0 5h272" stroke-opacity=".7"/><path d="M28 3v4M31 2v6M34 3v4M58 3v4M62 3v4M66 3v4M70 4v2M92 4v2M97 4v2M122 4v2M128 4v2M152 3v4M156 2v6M160 3v4M164 3v4M182 3v4M186 3v4M192 4v2M198 3v4M214 3v4M220 2v6M232 3v4M246 3v4M252 2v6M262 4v2"/></svg>
        </div>`;
        // tracks 3 and 4
        series(2, 629, 30.6, 4, "Human", "human"); series(2, 873, 30.6, 2, "Human", "human");
        series(3, 629, 30.6, 4, "Smoot", "smooth"); series(3, 873, 30.6, 2, "Smoot", "smooth");
        // track 5
        green(4, 383, 61, "Heavy Kick", "kick");
        series(4, 475, 7.66, 4, "", "tiny"); series(4, 505.7, 7.66, 48, "", "tiny"); series(4, 881, 7.66, 9, "", "tiny");
        // track 6 and 7
        blue(5, 502, 7.5, ""); blue(5, 619, 6, "");
        green(6, 504.5, 6, "", "tiny"); green(6, 620, 5, "", "tiny"); green(6, 625, 5, "", "tiny");
        // track 8
        for (let i = 0; i < 14; i++) green(7, 517 + i * 30.6, 19, "Inst", "inst");
        // track 9
        series(8, 505.7, 30.6, 15, "BA - To", "to");
        // track 10
        series(9, 383, 61.28, 7, "BA - Towntown", "town");
        series(9, 873, 61.28, 2, "BA - Towntown", "town");
        // track 11 and 12
        series(10, 383, 30.6, 12, "Inst 19", "i19");
        series(11, 383, 61.28, 6, "BA - Towntown", "town");
        // track 13
        [386.5, 448, 509, 570.5, 631.5, 692.5, 723.5, 876.5, 907.5].forEach(x => blue(12, x, 6, ""));
        // track 14
        series(13, 629, 15.3, 8, "KY", "ky"); series(13, 873, 15.3, 4, "KY", "ky");
        // track 15
        series(14, 690, 30.6, 2, "BA - To", "line"); series(14, 873, 30.6, 2, "BA - To", "line");
        // track 16
        series(15, 383, 30.6, 6, "BA - To", "line"); series(15, 629, 30.6, 4, "BA - To", "line"); series(15, 873, 30.6, 2, "BA - To", "line");
        // muted region on the next row
        html += `<div class="absolute h-[10px] bg-[#5a5a5a] text-[8px] text-[#b4b4b4] pl-[3px] leading-[12px]" style="left:${478 - X0}px;top:${rowTop(16)}px;width:92px">mememe_#07</div>`;
        document.getElementById("canvas").innerHTML = html;

        // channel strip faders
        const scale = ["0","3","6","9","12","15","18","21","24","30","35","40","45","50","60"];
        function fader(capTop, meterLeft) {
            let ticks = "";
            for (let y = 0; y < 94; y += 6.5) ticks += `M${y % 13 < 1 ? 3 : 6} ${y}H10`;
            return `<svg class="absolute left-[3px] top-0 w-[11px] h-[94px]" viewBox="0 0 11 94" fill="none" stroke="#909090" stroke-width=".7"><path d="${ticks}M10 0V94"/></svg>
                <span class="absolute left-[5px] w-[12px] h-[24px] rounded-[1px] bg-[linear-gradient(180deg,#7a7a7a,#e2e2e2_25%,#8d8d8d_45%,#d8d8d8_55%,#e8e8e8_80%,#777)]" style="top:${capTop}px"></span>
                <div class="absolute left-[21px] top-0 h-[94px] w-[10px] flex flex-col justify-between items-end text-[5.5px] leading-[6px] text-[#a4a4a4]">${scale.map(s => `<span>${s}</span>`).join("")}</div>
                <span class="absolute top-0 w-[7px] h-[94px] bg-[#3a3a3a]" style="left:${meterLeft}px"></span>`;
        }
        document.getElementById("fader1").innerHTML = fader(37, 31);
        document.getElementById("fader2").innerHTML = fader(14, 31);
    </script>
</body>
</html>
